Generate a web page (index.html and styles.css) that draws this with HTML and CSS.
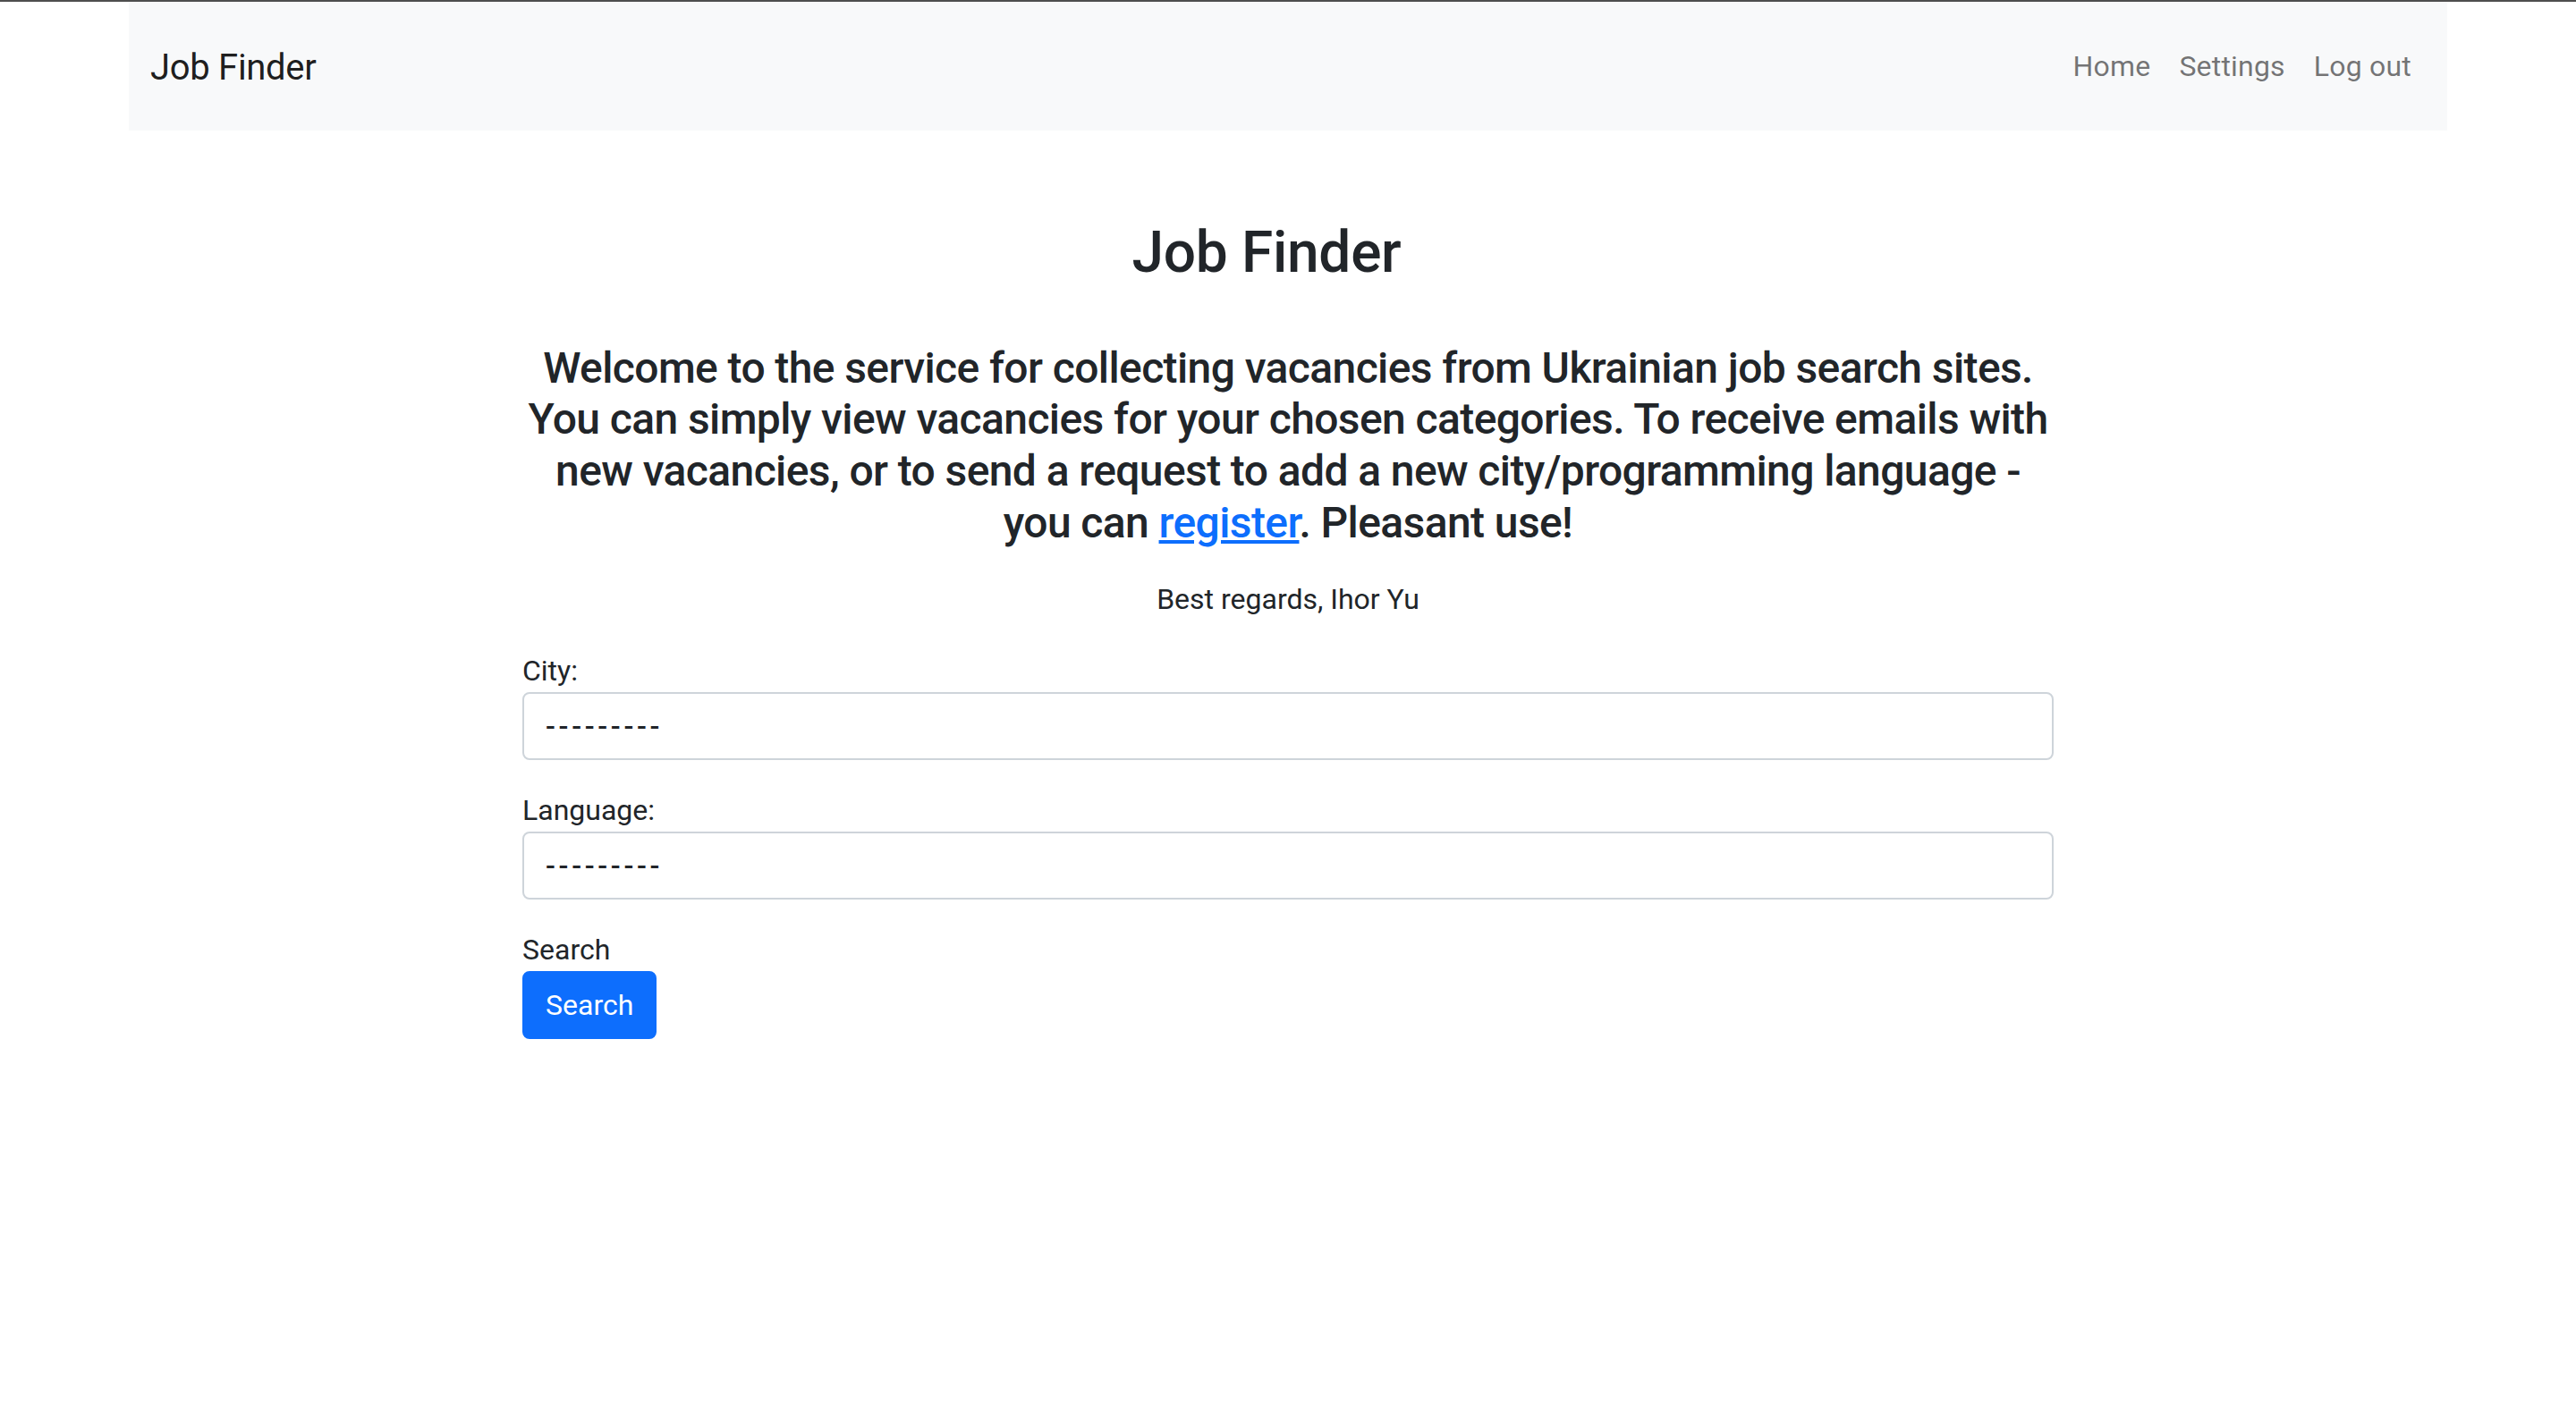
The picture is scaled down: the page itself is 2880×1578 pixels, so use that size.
FILE: index.html
```html
<!DOCTYPE html>
<html lang="en">
<head>
<meta charset="utf-8">
<title>Job Finder</title>
<link rel="stylesheet" href="styles.css">
</head>
<body>
<div class="container">
  <nav class="navbar">
    <a class="brand" href="#">Job Finder</a>
    <ul class="nav-links">
      <li><a href="#">Home</a></li>
      <li><a href="#">Settings</a></li>
      <li><a href="#">Log out</a></li>
    </ul>
  </nav>
  <main class="main">
    <div class="col">
      <h2 class="title">Job Finder</h2>
      <h4 class="intro">Welcome to the service for collecting vacancies from Ukrainian job search sites. You can simply view vacancies for your chosen categories. To receive emails with new vacancies, or to send a request to add a new city/programming language - you can <a href="#">register</a>. Pleasant use!</h4>
      <p class="regards">Best regards, Ihor Yu</p>
      <form class="search-form">
        <div class="field-group">
          <label for="city">City:</label>
          <select id="city" class="field"><option>---------</option></select>
        </div>
        <div class="field-group">
          <label for="lang">Language:</label>
          <select id="lang" class="field"><option>---------</option></select>
        </div>
        <div class="field-group">
          <label>Search</label>
          <button type="button" class="btn">Search</button>
        </div>
      </form>
    </div>
  </main>
</div>
</body>
</html>
```

FILE: styles.css
```css
* { box-sizing: border-box; }
html, body { margin: 0; padding: 0; }
body {
  font-family: Roboto, "Liberation Sans", sans-serif;
  color: #212529;
  background: #fff;
  border-top: 2px solid #4e4e4e;
  font-size: 32px;
  line-height: 1.5;
}
.container {
  max-width: 2640px;
  margin: 0 auto;
  padding: 0 24px;
}
.navbar {
  background: #f8f9fa;
  display: flex;
  align-items: center;
  justify-content: space-between;
  padding: 32px 24px;
}
.brand {
  font-size: 40px;
  line-height: 60px;
  padding: 12px 0 8px;
  color: rgba(0,0,0,.9);
  text-decoration: none;
  letter-spacing: -0.3px;
}
.nav-links {
  list-style: none;
  margin: 0;
  padding: 0;
  display: flex;
}
.nav-links a {
  display: block;
  padding: 16px;
  font-size: 32px;
  line-height: 48px;
  color: rgba(0,0,0,.55);
  text-decoration: none;
  letter-spacing: 0.2px;
}
.main { display: flex; justify-content: center; }
.col { width: 1712px; }
.title {
  margin: 99px 0 0;
  padding-right: 48px;
  font-size: 64px;
  font-weight: 500;
  line-height: 1.2;
  text-align: center;
  letter-spacing: -0.3px;
}
.intro {
  margin: 61px 0 0;
  font-size: 48px;
  font-weight: 500;
  line-height: 1.2;
  text-align: center;
  letter-spacing: -0.6px;
}
.intro a { color: #0d6efd; text-decoration: underline; }
.regards {
  margin: 33px 0 32px;
  text-align: center;
}
.search-form { margin: 0; }
.field-group { margin-bottom: 32px; }
.field-group label { display: block; }
.field {
  display: block;
  width: 100%;
  appearance: none;
  -webkit-appearance: none;
  background: #fff;
  border: 2px solid #ced4da;
  border-radius: 8px;
  padding: 12px 24px;
  font-family: inherit;
  font-size: 32px;
  line-height: 48px;
  color: #212529;
  letter-spacing: 3.7px;
  font-weight: 500;
}
.btn {
  display: inline-block;
  background: #0d6efd;
  color: #fff;
  border: 2px solid #0d6efd;
  border-radius: 8px;
  padding: 12px 24px;
  font-family: inherit;
  font-size: 32px;
  line-height: 48px;
}
```
